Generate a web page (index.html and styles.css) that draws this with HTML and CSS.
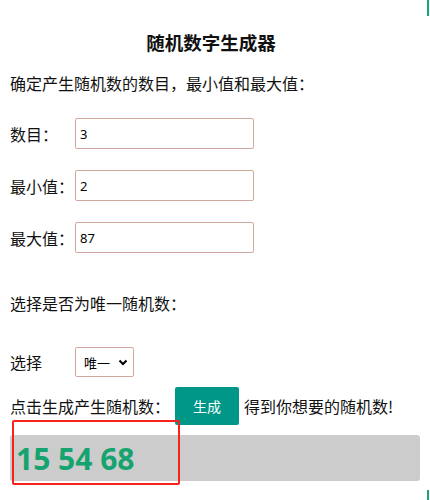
FILE: index.html
```html
<!DOCTYPE html>
<html lang="zh">
<head>
<meta charset="utf-8">
<title>随机数字生成器</title>
<link rel="stylesheet" href="styles.css">
</head>
<body>
<div class="page">
  <h1 class="title">随机数字生成器</h1>
  <p class="intro">确定产生随机数的数目，最小值和最大值：</p>
  <div class="fields">
    <div class="row"><label class="label">数目：</label><input class="field" type="text" value="3"></div>
    <div class="row"><label class="label">最小值：</label><input class="field" type="text" value="2"></div>
    <div class="row"><label class="label">最大值：</label><input class="field" type="text" value="87"></div>
  </div>
  <p class="question">选择是否为唯一随机数：</p>
  <div class="row select-row">
    <label class="label">选择</label>
    <div class="select">
      <span>唯一</span>
      <svg class="chev" width="10" height="7" viewBox="0 0 10 7"><path d="M1.5 1.5 L5 5 L8.5 1.5" fill="none" stroke="#000" stroke-width="2"/></svg>
    </div>
  </div>
  <div class="gen-row">
    <span>点击生成产生随机数：</span>
    <button class="btn">生成</button>
    <span>得到你想要的随机数!</span>
  </div>
  <div class="result">15 54 68</div>
  <div class="mark"></div>
</div>
<div class="edge edge-top"></div>
<div class="edge edge-bottom"></div>
</body>
</html>
```
FILE: styles.css
```css
html, body {
  margin: 0;
  padding: 0;
  background: #fff;
}
body {
  font-family: "Noto Sans CJK SC", "Noto Sans", sans-serif;
  color: #111;
  font-size: 16px;
  position: relative;
  height: 500px;
  overflow: hidden;
}
.page {
  position: relative;
  padding: 30px 10px 0 10px;
  width: 410px;
}
.title {
  margin: 0;
  font-size: 18.5px;
  line-height: 24px;
  font-weight: 700;
  text-align: center;
  padding-right: 8px;
}
.intro {
  margin: 17px 0 0 0;
  line-height: 24px;
}
.fields {
  margin-top: 23px;
  display: flex;
  flex-direction: column;
  gap: 21px;
}
.row {
  display: flex;
  align-items: center;
}
.label {
  width: 65px;
  flex: none;
  line-height: 24px;
}
.field {
  box-sizing: border-box;
  width: 179px;
  height: 31px;
  border: 1px solid #cfaa9c;
  border-radius: 2px;
  padding: 0 4px;
  font-family: "Noto Sans", sans-serif;
  font-size: 13px;
  color: #000;
  background: #fff;
  outline: none;
}
.question {
  margin: 38px 0 0 0;
  line-height: 24px;
}
.select-row {
  margin-top: 32px;
}
.select {
  box-sizing: border-box;
  width: 59px;
  height: 30px;
  border: 1px solid #cfaa9c;
  border-radius: 2px;
  display: flex;
  align-items: center;
  justify-content: space-between;
  padding: 0 5px 0 8px;
  font-size: 13px;
  color: #000;
}
.chev {
  display: block;
}
.gen-row {
  margin-top: 10px;
  display: flex;
  align-items: center;
  height: 38px;
  white-space: nowrap;
}
.btn {
  margin: 0 5px 0 5px;
  width: 64px;
  height: 38px;
  border: none;
  border-radius: 2px;
  background: #009688;
  color: #fff;
  font-family: "Noto Sans CJK SC", sans-serif;
  font-size: 14px;
  padding: 0;
}
.result {
  margin-top: 10px;
  height: 46px;
  background: #cccccc;
  border-radius: 3px;
  box-sizing: border-box;
  padding-left: 6px;
  font-family: "Open Sans", sans-serif;
  font-weight: 700;
  font-size: 30px;
  line-height: 48px;
  color: #15a36f;
}
.mark {
  position: absolute;
  left: 12px;
  top: 420px;
  width: 164px;
  height: 61px;
  border: 2px solid #f5231b;
  border-radius: 2px;
}
.edge {
  position: absolute;
  right: 1px;
  width: 2px;
  background: #18a37a;
}
.edge-top {
  top: 0;
  height: 16px;
}
.edge-bottom {
  top: 490px;
  height: 10px;
}
```
